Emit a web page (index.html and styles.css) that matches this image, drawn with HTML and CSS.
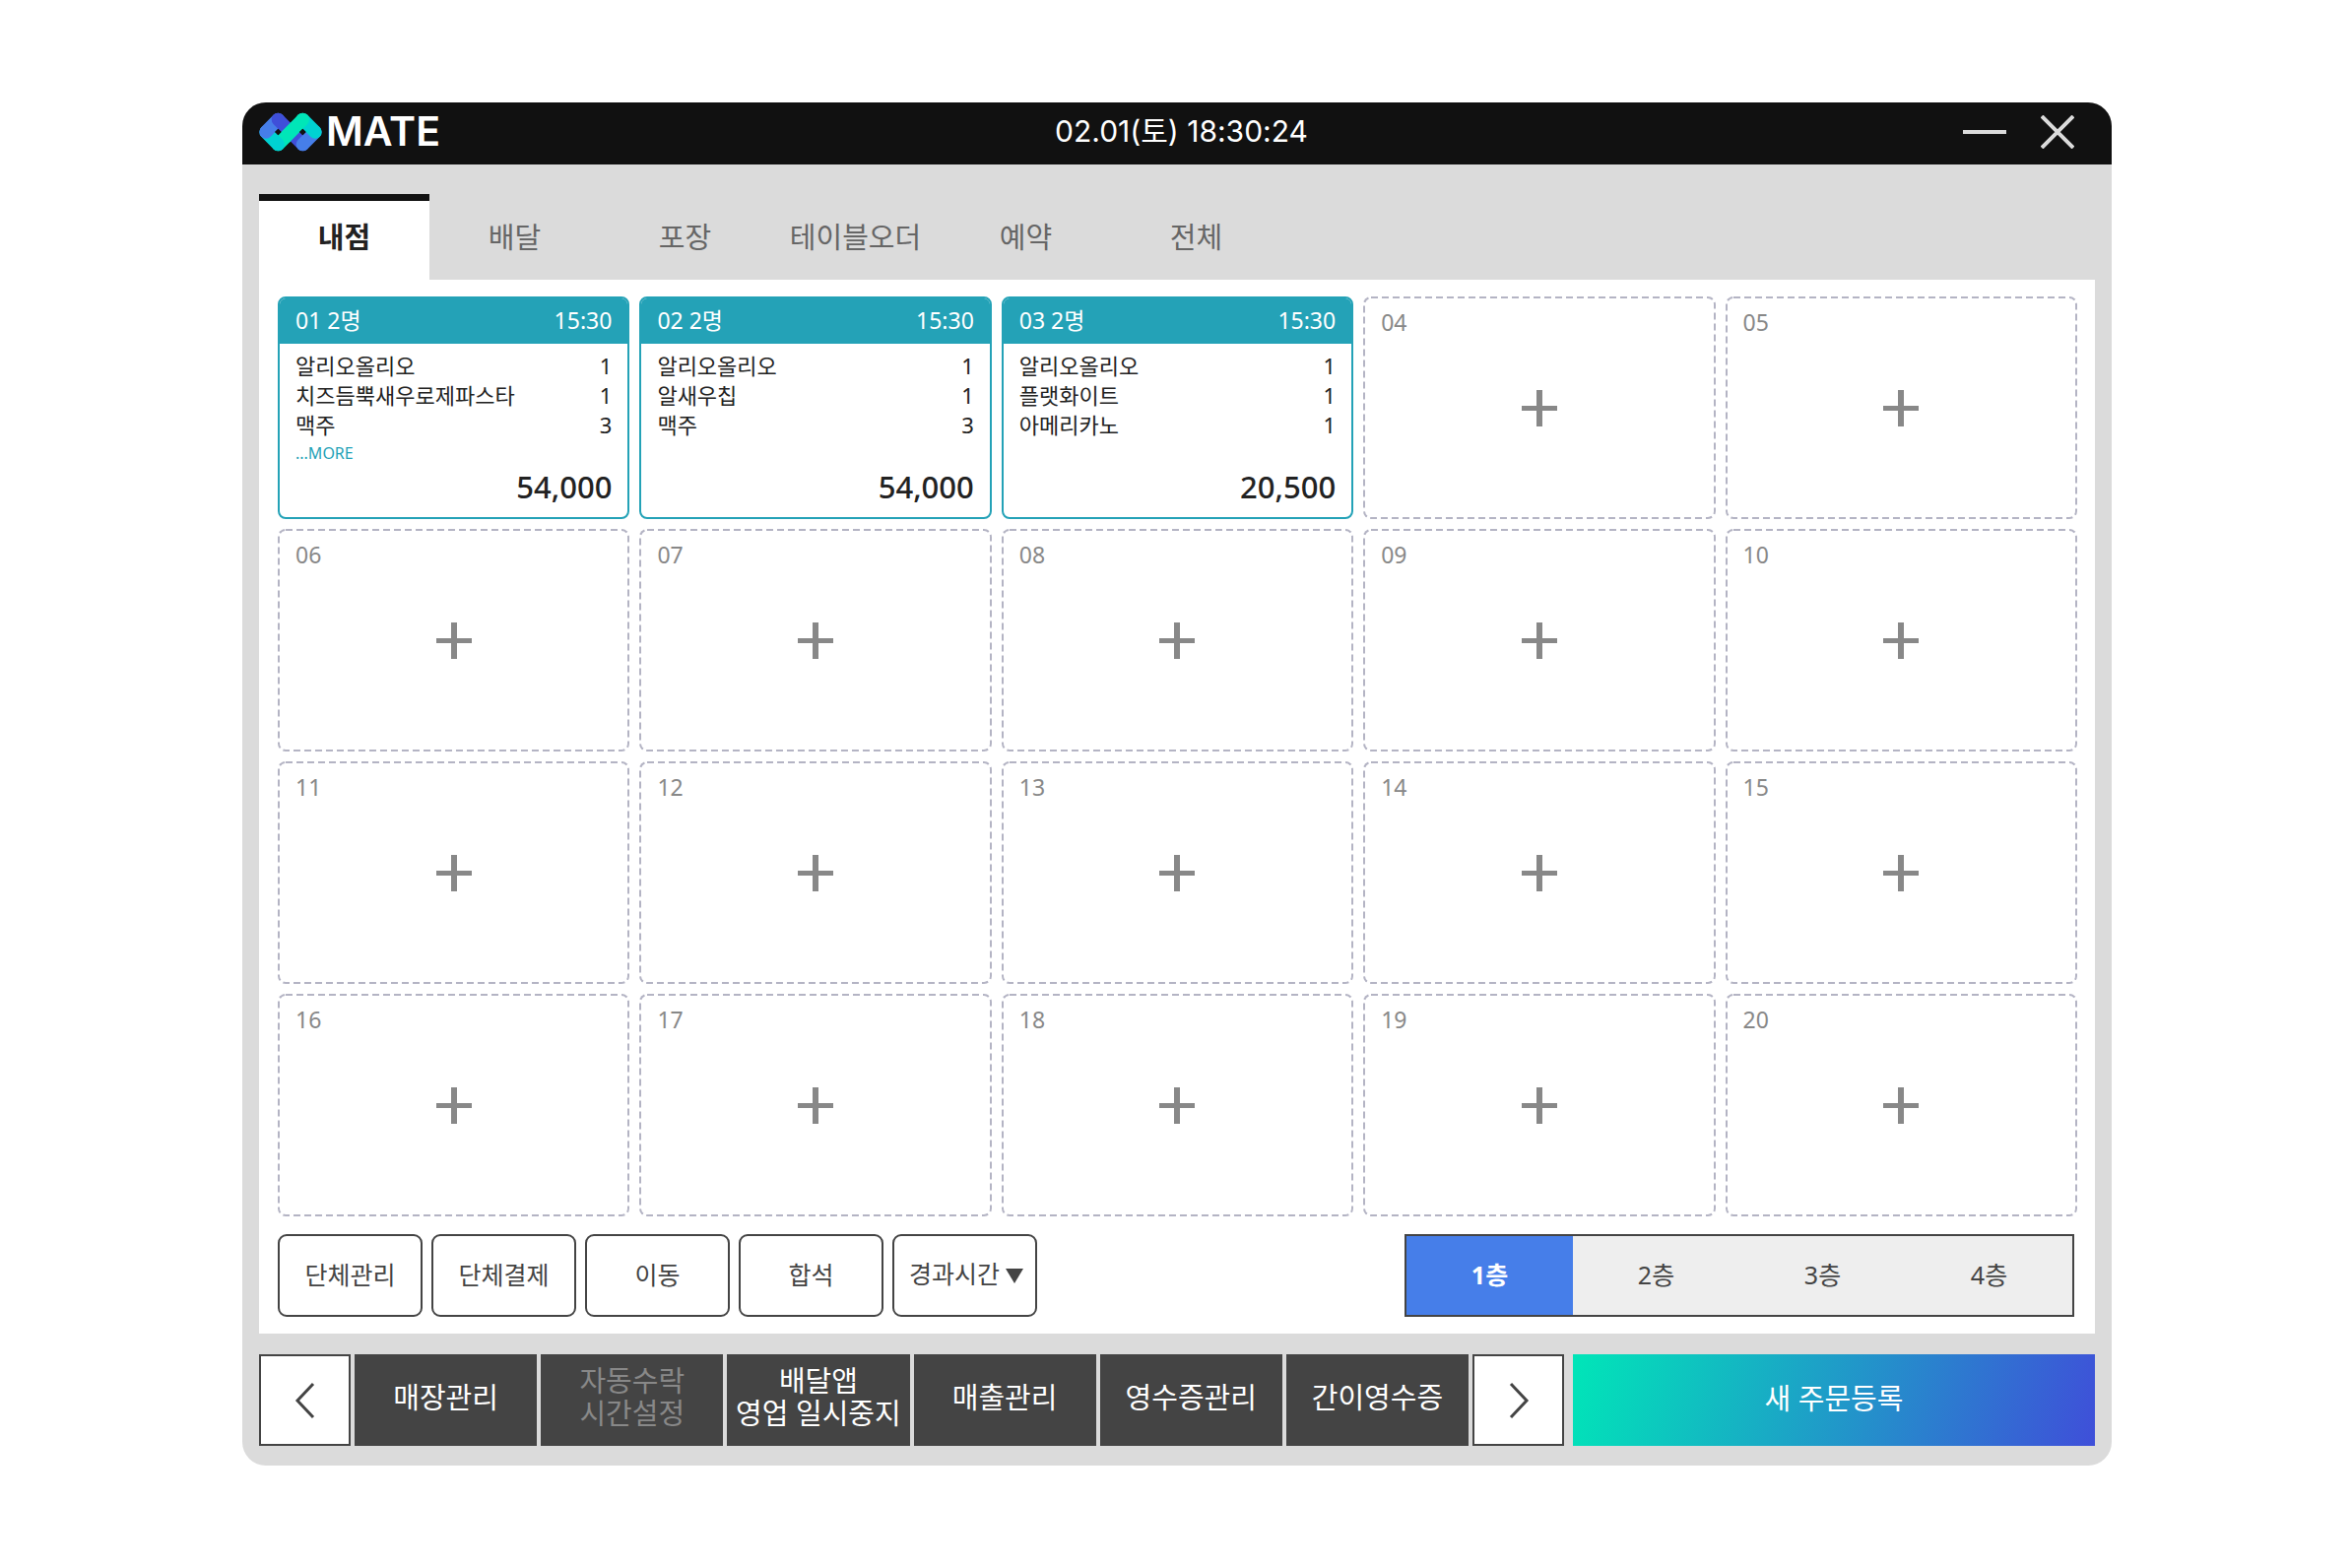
FILE: index.html
```html
<!DOCTYPE html>
<html lang="ko">
<head>
<meta charset="utf-8">
<meta name="viewport" content="width=device-width, initial-scale=1">
<title>MATE POS</title>
<link rel="stylesheet" href="styles.css">
</head>
<body>
<div class="window">
  <header class="titlebar">
    <div class="brand">
      <svg class="brand-mark" viewBox="82 74 192 118" fill="none" stroke-width="40" stroke-linecap="round" aria-hidden="true">
        <path d="M140 171L178 133" stroke="#00e6b8"/>
        <path d="M103 133L140 171" stroke="#00d2d2"/>
        <path d="M103 133L140 95" stroke="#467ee9"/>
        <path d="M140 95L215 171" stroke="#3f4fd9"/>
        <path d="M253 133L215 171" stroke="#467ee9"/>
        <path d="M215 95L253 133" stroke="#00d2d2"/>
        <path d="M160 151L215 95" stroke="#00e6b8" stroke-linecap="butt"/>
        <circle cx="215" cy="95" r="20" fill="#00e6b8"/>
        <path d="M140 123l10 10-10 10-10-10zM215 123l10 10-10 10-10-10z" fill="#111"/>
      </svg>
      <span class="brand-name">MATE</span>
    </div>
    <time class="clock">02.01(토) 18:30:24</time>
    <div class="controls">
      <button class="control" type="button" aria-label="최소화"><svg width="44" height="34" viewBox="0 0 44 34"><path d="M0 17H44"/></svg></button>
      <button class="control" type="button" aria-label="닫기"><svg width="34" height="34" viewBox="0 0 34 34"><path d="M1 1L33 33M33 1L1 33"/></svg></button>
    </div>
  </header>

  <nav class="tabs">
    <button class="tab tab-active" type="button">내점</button>
    <button class="tab" type="button">배달</button>
    <button class="tab" type="button">포장</button>
    <button class="tab" type="button">테이블오더</button>
    <button class="tab" type="button">예약</button>
    <button class="tab" type="button">전체</button>
  </nav>

  <main class="panel">
    <div class="seats">
      <article class="order">
        <header class="order-head"><span>01 2명</span><span>15:30</span></header>
        <ul class="order-items">
          <li><span>알리오올리오</span><span>1</span></li>
          <li><span>치즈듬뿍새우로제파스타</span><span>1</span></li>
          <li><span>맥주</span><span>3</span></li>
        </ul>
        <a class="order-more" href="#more">...MORE</a>
        <strong class="order-total">54,000</strong>
      </article>
      <article class="order">
        <header class="order-head"><span>02 2명</span><span>15:30</span></header>
        <ul class="order-items">
          <li><span>알리오올리오</span><span>1</span></li>
          <li><span>알새우칩</span><span>1</span></li>
          <li><span>맥주</span><span>3</span></li>
        </ul>
        <strong class="order-total">54,000</strong>
      </article>
      <article class="order">
        <header class="order-head"><span>03 2명</span><span>15:30</span></header>
        <ul class="order-items">
          <li><span>알리오올리오</span><span>1</span></li>
          <li><span>플랫화이트</span><span>1</span></li>
          <li><span>아메리카노</span><span>1</span></li>
        </ul>
        <strong class="order-total">20,500</strong>
      </article>
      <button class="seat" type="button">04</button>
      <button class="seat" type="button">05</button>
      <button class="seat" type="button">06</button>
      <button class="seat" type="button">07</button>
      <button class="seat" type="button">08</button>
      <button class="seat" type="button">09</button>
      <button class="seat" type="button">10</button>
      <button class="seat" type="button">11</button>
      <button class="seat" type="button">12</button>
      <button class="seat" type="button">13</button>
      <button class="seat" type="button">14</button>
      <button class="seat" type="button">15</button>
      <button class="seat" type="button">16</button>
      <button class="seat" type="button">17</button>
      <button class="seat" type="button">18</button>
      <button class="seat" type="button">19</button>
      <button class="seat" type="button">20</button>
    </div>

    <div class="toolbar">
      <div class="actions">
        <button class="action" type="button">단체관리</button>
        <button class="action" type="button">단체결제</button>
        <button class="action" type="button">이동</button>
        <button class="action" type="button">합석</button>
        <select class="action action-select" aria-label="경과시간"><option>경과시간</option></select>
      </div>
      <div class="floors">
        <button class="floor floor-active" type="button">1층</button>
        <button class="floor" type="button">2층</button>
        <button class="floor" type="button">3층</button>
        <button class="floor" type="button">4층</button>
      </div>
    </div>
  </main>

  <footer class="footer">
    <div class="menu">
      <button class="pager" type="button" aria-label="이전"><svg width="22" height="38" viewBox="0 0 22 38"><path d="M19 2L3 19L19 36"/></svg></button>
      <button class="menu-item" type="button">매장관리</button>
      <button class="menu-item" type="button" disabled>자동수락<br>시간설정</button>
      <button class="menu-item" type="button">배달앱<br>영업 일시중지</button>
      <button class="menu-item" type="button">매출관리</button>
      <button class="menu-item" type="button">영수증관리</button>
      <button class="menu-item" type="button">간이영수증</button>
      <button class="pager" type="button" aria-label="다음"><svg width="22" height="38" viewBox="0 0 22 38"><path d="M3 2L19 19L3 36"/></svg></button>
    </div>
    <button class="new-order" type="button">새 주문등록</button>
  </footer>
</div>
</body>
</html>
```

FILE: styles.css
```css
* {
  box-sizing: border-box;
}

body {
  margin: 0;
  padding: 104px 244px 104px 246px;
  background: #fff;
  color: #222;
  font-family: "Noto Sans", "Noto Sans CJK KR", sans-serif;
}

button,
select {
  margin: 0;
  padding: 0;
  border: 0;
  background: none;
  color: inherit;
  font: inherit;
  cursor: pointer;
}

.window {
  overflow: hidden;
  border-radius: 24px;
  background: #dbdbdb;
}

/* Title bar */
.titlebar {
  display: grid;
  grid-template-columns: 1fr auto 1fr;
  align-items: center;
  height: 63px;
  padding: 0 8px 4px 17px;
  background: #111;
  color: #fff;
}

.brand {
  display: flex;
  align-items: center;
  gap: 4px;
}

.brand-mark {
  width: 64px;
  height: 40px;
}

.brand-name {
  font-family: Inter, sans-serif;
  font-size: 41px;
  font-weight: 600;
  line-height: 59px;
}

.clock {
  font-family: Inter, "Noto Sans CJK KR", sans-serif;
  font-size: 30px;
  line-height: 59px;
}

.controls {
  display: flex;
  justify-content: flex-end;
  gap: 35px;
  padding-right: 30px;
}

.control svg {
  display: block;
  fill: none;
  stroke: #dbdbdb;
  stroke-width: 4;
}

/* Tabs */
.tabs {
  display: flex;
  padding: 30px 17px 0;
}

.tab {
  width: 173px;
  height: 87px;
  padding-bottom: 6px;
  border-top: 7px solid transparent;
  color: #666;
  font-size: 29px;
  line-height: 40px;
}

.tab-active {
  border-top-color: #111;
  background: #fff;
  color: #222;
  font-weight: 700;
}

/* Seating plan */
.panel {
  margin: 0 17px;
  padding: 17px 18px 17px 19px;
  background: #fff;
}

.seats {
  display: grid;
  grid-template-columns: repeat(5, 1fr);
  grid-auto-rows: 226px;
  gap: 10px;
}

.seat {
  position: relative;
  display: flex;
  align-items: flex-start;
  padding: 10px 18px;
  border-radius: 8px;
  background: url("data:image/svg+xml,%3Csvg xmlns='http://www.w3.org/2000/svg' width='100%25' height='100%25'%3E%3Crect width='100%25' height='100%25' rx='8' fill='none' stroke='%23b4b4c4' stroke-width='4' stroke-dasharray='7 4'/%3E%3C/svg%3E");
  color: #888;
  font-size: 23px;
  line-height: 32px;
}

.seat::before,
.seat::after {
  content: "";
  position: absolute;
  inset: 0;
  margin: auto;
  background: #888;
}

.seat::before {
  width: 36px;
  height: 5px;
}

.seat::after {
  width: 6px;
  height: 37px;
}

.order {
  display: flex;
  flex-direction: column;
  overflow: hidden;
  border: 2px solid #24a2b7;
  border-radius: 8px;
  font-size: 22px;
  line-height: 30px;
}

.order-head {
  display: flex;
  justify-content: space-between;
  padding: 7px 16px 9px;
  background: #24a2b7;
  color: #fff;
  font-size: 23px;
}

.order-items {
  margin: 0;
  padding: 7px 16px 0;
  list-style: none;
}

.order-items li {
  display: flex;
  justify-content: space-between;
}

.order-more {
  padding: 0 16px;
  color: #24a2b7;
  font-size: 16px;
  line-height: 28px;
  text-decoration: none;
}

.order-total {
  margin-top: auto;
  padding: 0 16px 13px;
  font-size: 31px;
  font-weight: 500;
  line-height: 36px;
  text-align: right;
}

/* Toolbar under the plan */
.toolbar {
  display: flex;
  justify-content: space-between;
  padding: 18px 3px 0 0;
}

.actions {
  display: flex;
  gap: 9px;
}

.action {
  width: 147px;
  height: 84px;
  padding-bottom: 4px;
  border: 2px solid #444;
  border-radius: 9px;
  color: #444;
  font-size: 25px;
}

.action-select {
  appearance: none;
  padding-left: 15px;
  background: url("data:image/svg+xml,%3Csvg xmlns='http://www.w3.org/2000/svg' width='18' height='15'%3E%3Cpath d='M0 0H18L9 15Z' fill='%23444'/%3E%3C/svg%3E") right 12px center no-repeat;
}

.floors {
  display: grid;
  grid-template-columns: repeat(4, 169px);
  border: 2px solid #444;
  background: #eee;
}

.floor {
  padding-bottom: 4px;
  color: #444;
  font-size: 25px;
}

.floor-active {
  background: #467ee9;
  color: #fff;
  font-weight: 700;
}

/* Bottom menu */
.footer {
  display: flex;
  gap: 9px;
  padding: 21px 17px 20px;
}

.menu {
  display: grid;
  flex: 5;
  grid-template-columns: 93px repeat(6, 1fr) 93px;
  gap: 4px;
}

.menu-item {
  height: 93px;
  padding-bottom: 7px;
  background: #444;
  color: #fff;
  font-size: 29px;
  line-height: 33px;
  white-space: nowrap;
}

.menu-item:disabled {
  color: #888;
}

.pager {
  display: flex;
  align-items: center;
  justify-content: center;
  border: 2px solid #444;
  background: #fff;
}

.pager svg {
  fill: none;
  stroke: #444;
  stroke-width: 3;
}

.new-order {
  flex: 2;
  padding-bottom: 7px;
  background: linear-gradient(105deg, #00e6b8, #3f4fd9);
  color: #fff;
  font-size: 29px;
}
```
